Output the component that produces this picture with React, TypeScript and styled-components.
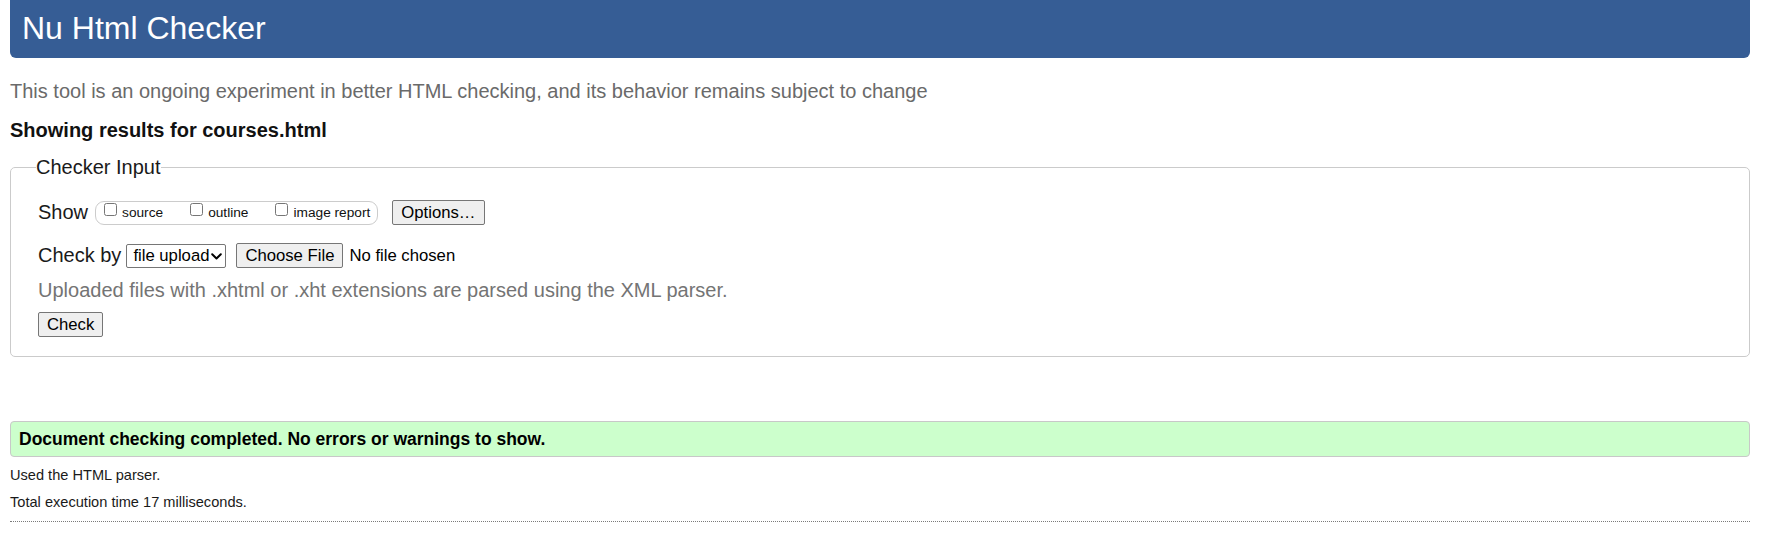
import React from "react";
import styled, { createGlobalStyle } from "styled-components";

const GlobalStyle = createGlobalStyle`
  html, body {
    margin: 0;
    padding: 0;
    background: #ffffff;
  }
  body {
    font-family: "Liberation Sans", Arial, sans-serif;
    color: #1a1a1a;
  }
`;

const Page = styled.div`
  padding: 0 16px 0 10px;
`;

const Header = styled.h1`
  margin: 0;
  height: 58px;
  box-sizing: border-box;
  padding: 0 12px 2px;
  line-height: 56px;
  font-size: 32px;
  font-weight: normal;
  color: #ffffff;
  background: #365d95;
  border-radius: 0 0 6px 6px;
`;

const Intro = styled.p`
  margin: 22px 0 0;
  font-size: 20px;
  line-height: 23px;
  color: #6a6a6a;
`;

const ResultsHeading = styled.h2`
  margin: 16px 0 0;
  font-size: 20px;
  line-height: 23px;
  font-weight: bold;
  color: #111111;
`;

const Fieldset = styled.fieldset`
  margin: 14px 0 0;
  padding: 21px 27px 19px;
  border: 1px solid #cbcbcb;
  border-radius: 5px;
  min-width: 0;
`;

const Legend = styled.legend`
  padding: 0;
  margin-left: -2px;
  font-size: 20px;
  line-height: 23px;
  color: #1a1a1a;
`;

const Row = styled.div<{ $top?: number }>`
  display: flex;
  align-items: center;
  margin-top: ${(p) => p.$top ?? 0}px;
  font-size: 20px;
  line-height: 23px;
`;

const RowLabel = styled.span`
  color: #1a1a1a;
`;

const CheckGroup = styled.span`
  display: inline-flex;
  align-items: center;
  gap: 27px;
  height: 24px;
  box-sizing: border-box;
  margin: 0 14px 0 7px;
  padding: 0 7px 0 8px;
  border: 1px solid #cccccc;
  border-radius: 9px;
`;

const CheckItem = styled.label`
  display: inline-flex;
  align-items: center;
  gap: 5px;
  font-size: 13.7px;
  line-height: 16px;
  color: #111111;
`;

const Checkbox = styled.input.attrs({ type: "checkbox" })`
  margin: 0 0 6px;
  width: 13px;
  height: 13px;
`;

const Button = styled.button`
  font-family: "Liberation Sans", Arial, sans-serif;
  font-size: 16.7px;
  line-height: 19px;
  height: 25px;
  box-sizing: border-box;
  padding: 2px 8px;
  color: #000000;
  background: #efefef;
  border: 1px solid #767676;
  border-radius: 2px;
`;

const SelectWrap = styled.span`
  position: relative;
  display: inline-flex;
  margin-left: 5px;
`;

const Select = styled.select`
  appearance: none;
  -webkit-appearance: none;
  width: 100px;
  height: 24px;
  box-sizing: border-box;
  margin: 0;
  padding: 0 16px 0 6px;
  font-family: "Liberation Sans", Arial, sans-serif;
  font-size: 16.7px;
  color: #000000;
  background: #ffffff;
  border: 1px solid #767676;
  border-radius: 2px;
`;

const Chevron = styled.svg`
  position: absolute;
  right: 4px;
  top: 9px;
  width: 11px;
  height: 7px;
  pointer-events: none;
`;

const FileInput = styled.input.attrs({ type: "file" })`
  margin-left: 10px;
  font-family: "Liberation Sans", Arial, sans-serif;
  font-size: 16.7px;
  color: #000000;

  &::file-selector-button {
    font-family: "Liberation Sans", Arial, sans-serif;
    font-size: 16.7px;
    line-height: 19px;
    height: 25px;
    box-sizing: border-box;
    padding: 2px 8px;
    margin-right: 6px;
    color: #000000;
    background: #efefef;
    border: 1px solid #767676;
    border-radius: 2px;
  }
`;

const Help = styled.p`
  margin: 11px 0 0;
  font-size: 20px;
  line-height: 23px;
  color: #747474;
`;

const Success = styled.div`
  margin-top: 64px;
  height: 36px;
  box-sizing: border-box;
  padding: 0 8px;
  border: 1px solid #c8c8c8;
  border-radius: 4px;
  background: #ccffcc;
  font-size: 17.5px;
  font-weight: bold;
  line-height: 34px;
  color: #000000;
`;

const Detail = styled.p<{ $top: number }>`
  margin: ${(p) => p.$top}px 0 0;
  font-size: 14.6px;
  line-height: 17px;
  color: #1a1a1a;
`;

const Rule = styled.hr`
  margin: 10px 0 0;
  height: 0;
  border: 0;
  border-top: 1px dotted #7a7a7a;
`;

export default function App() {
  return (
    <Page>
      <GlobalStyle />
      <Header>Nu Html Checker</Header>
      <Intro>
        This tool is an ongoing experiment in better HTML checking, and its
        behavior remains subject to change
      </Intro>
      <ResultsHeading>Showing results for courses.html</ResultsHeading>
      <Fieldset>
        <Legend>Checker Input</Legend>
        <Row>
          <RowLabel>Show</RowLabel>
          <CheckGroup>
            <CheckItem>
              <Checkbox />
              source
            </CheckItem>
            <CheckItem>
              <Checkbox />
              outline
            </CheckItem>
            <CheckItem>
              <Checkbox />
              image report
            </CheckItem>
          </CheckGroup>
          <Button type="button">Options…</Button>
        </Row>
        <Row $top={18}>
          <RowLabel>Check by</RowLabel>
          <SelectWrap>
            <Select defaultValue="file">
              <option value="address">address</option>
              <option value="file">file upload</option>
              <option value="text">text input</option>
            </Select>
            <Chevron viewBox="0 0 11 7" aria-hidden="true">
              <path
                d="M1.2 1.2 L5.5 5.5 L9.8 1.2"
                fill="none"
                stroke="#000"
                strokeWidth="2"
                strokeLinecap="round"
                strokeLinejoin="round"
              />
            </Chevron>
          </SelectWrap>
          <FileInput />
        </Row>
        <Help>
          Uploaded files with .xhtml or .xht extensions are parsed using the XML
          parser.
        </Help>
        <Row $top={10}>
          <Button type="button">Check</Button>
        </Row>
      </Fieldset>
      <Success>Document checking completed. No errors or warnings to show.</Success>
      <Detail $top={10}>Used the HTML parser.</Detail>
      <Detail $top={10}>Total execution time 17 milliseconds.</Detail>
      <Rule />
    </Page>
  );
}
